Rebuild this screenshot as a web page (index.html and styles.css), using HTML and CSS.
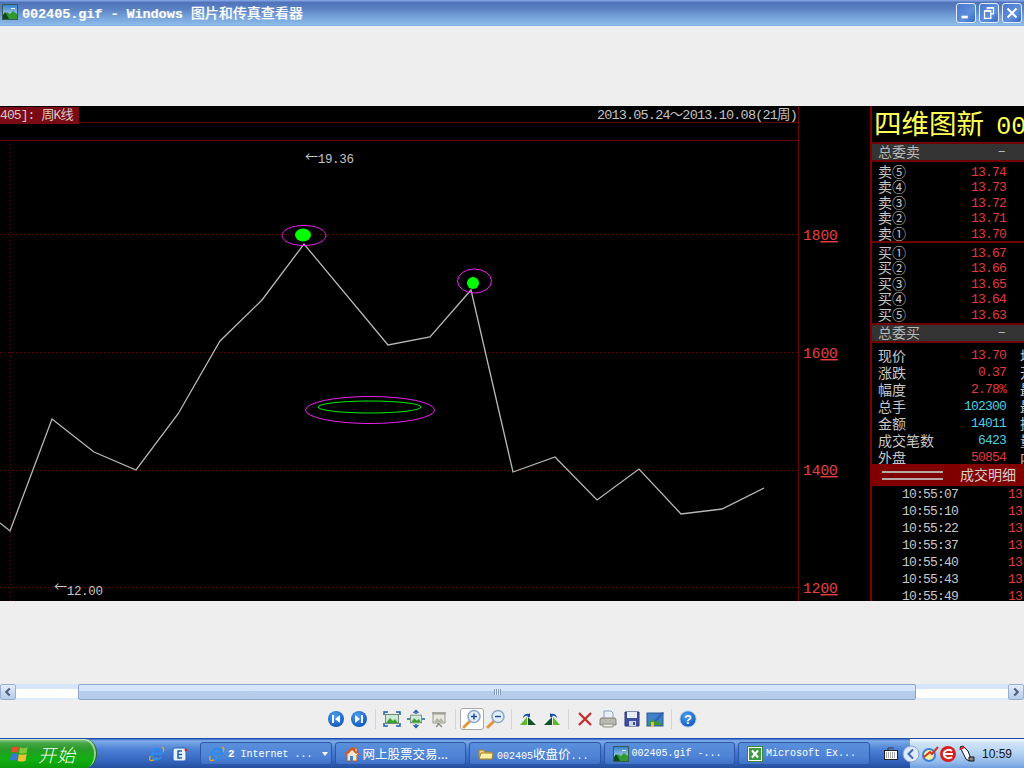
FILE: index.html
```html
<!DOCTYPE html>
<html lang="zh">
<head>
<meta charset="utf-8">
<title>002405.gif - Windows 图片和传真查看器</title>
<link rel="stylesheet" href="styles.css">
</head>
<body>
<svg class="defs" width="0" height="0">
  <defs>
    <linearGradient id="sky" x1="0" y1="0" x2="0" y2="1"><stop offset="0" stop-color="#2f7fd0"/><stop offset="1" stop-color="#d8f0f0"/></linearGradient>
    <radialGradient id="ball" cx="0.4" cy="0.3" r="0.8"><stop offset="0" stop-color="#4aa0f0"/><stop offset="1" stop-color="#0a4fb8"/></radialGradient>
    <symbol id="pic" viewBox="0 0 16 16">
      <rect x="0.5" y="0.5" width="15" height="15" fill="url(#sky)" stroke="#3d5a50"/>
      <path d="M1 12 5 8l3 2 3-3 4 3v5H1z" fill="#2f9a30"/>
      <path d="M1 11l2-3 2 3 2 4H1z" fill="#0d4a20"/>
      <path d="M9 4h4v1H9z" fill="#fff"/>
    </symbol>
    <symbol id="ie" viewBox="0 0 16 16">
      <path d="M13 1.500c2 0 2.500 2 .5 5M1.500 10c-1.500 3-1 5 1.500 4.500 1.500-.3 3-1 5-2.500" fill="none" stroke="#e8a828" stroke-width="1.300"/>
      <path d="M3.500 7.800h9.500M12.600 10.800A5.300 5.300 0 1 1 13.300 7.800" fill="none" stroke="#2a8cf0" stroke-width="2.100"/>
    </symbol>
    <symbol id="pict" viewBox="0 0 14 10">
      <rect x="0.5" y="0.5" width="13" height="9" fill="#cfe8d8" stroke="#708878"/>
      <path d="M1 9 5 4l3 3 2-2 3 4z" fill="#3aa030"/>
    </symbol>
    <symbol id="mag" viewBox="0 0 20 20">
      <path d="M8 12 2 18" stroke="#e09838" stroke-width="3" stroke-linecap="round"/>
      <circle cx="12" cy="7.5" r="6" fill="#e4eefa" stroke="#8da8c8" stroke-width="1.6"/>
    </symbol>
  </defs>
</svg>
<div class="win">
  <header class="title">
    <svg class="ic16"><use href="#pic"/></svg>
    <span class="title-text">002405.gif - Windows <span class="title-cjk">图片和传真查看器</span></span>
    <div class="ctrls">
      <span class="ctrl"><svg viewBox="0 0 20 20"><path d="M5 13h7v3H5z" fill="#fff"/></svg></span>
      <span class="ctrl"><svg viewBox="0 0 20 20"><path d="M8 6V4h7v7h-3M5 8h7v8H5z M5 8h7" fill="none" stroke="#fff" stroke-width="1.4"/><path d="M5 7.5h7M8 4.5h7" stroke="#fff" stroke-width="1.5"/></svg></span>
      <span class="ctrl"><svg viewBox="0 0 20 20"><path d="M5 5l10 10M15 5 5 15" stroke="#fff" stroke-width="2.2"/></svg></span>
    </div>
  </header>

  <main class="view">
    <div class="shot">
      <section class="chart">
        <svg class="plot" viewBox="0 106 870 495">
          <g class="grid">
            <path d="M0 234.500H798M0 352.500H798M0 470.500H798M0 587.500H798M10.500 140V601"/>
          </g>
          <path class="rule" d="M0 122.500H798M0 140.500H798M798.500 106V601"/>
          <polyline class="price" points="0,523 10,531 52,419 94,452 136,470 178,414 220,341 262,300 304,244 388,345 430,337 471,290 513,472 555,457 597,500 639,469 681,514 722,509 764,488"/>
          <ellipse class="mag" cx="304" cy="235.500" rx="22" ry="10"/>
          <ellipse class="dot" cx="303" cy="235" rx="8" ry="6.500"/>
          <ellipse class="mag" cx="474.500" cy="281" rx="17" ry="12"/>
          <ellipse class="dot" cx="473" cy="283" rx="6" ry="6"/>
          <ellipse class="mag" cx="370" cy="410" rx="64.500" ry="13.500"/>
          <ellipse class="lime" cx="369.500" cy="407" rx="51.500" ry="6"/>
          <text class="note" x="305" y="160.500"><tspan class="arr">←</tspan><tspan dy="2.500">19.36</tspan></text>
          <text class="note" x="54" y="590.500"><tspan class="arr">←</tspan><tspan dy="4.500">12.00</tspan></text>
          <text class="axis" x="803" y="240">18<tspan class="ul">00</tspan></text>
          <text class="axis" x="803" y="358">16<tspan class="ul">00</tspan></text>
          <text class="axis" x="803" y="475">14<tspan class="ul">00</tspan></text>
          <text class="axis" x="803" y="593">12<tspan class="ul">00</tspan></text>
        </svg>
        <div class="head">
          <span class="tag">405]: 周K线</span>
          <span class="range">2013.05.24～2013.10.08(21周)</span>
        </div>
      </section>
      <aside class="stock">
        <div class="name">四维图新 <span class="code">00</span></div>
        <div class="bar"><span>总委卖</span><span class="dash">–</span></div>
        <div class="book book-sell">
          <div class="row"><span>卖⑤</span><span class="n red">13.74</span></div>
          <div class="row"><span>卖④</span><span class="n red">13.73</span></div>
          <div class="row"><span>卖③</span><span class="n red">13.72</span></div>
          <div class="row"><span>卖②</span><span class="n red">13.71</span></div>
          <div class="row"><span>卖①</span><span class="n red">13.70</span></div>
        </div>
        <div class="book">
          <div class="row"><span>买①</span><span class="n red">13.67</span></div>
          <div class="row"><span>买②</span><span class="n red">13.66</span></div>
          <div class="row"><span>买③</span><span class="n red">13.65</span></div>
          <div class="row"><span>买④</span><span class="n red">13.64</span></div>
          <div class="row"><span>买⑤</span><span class="n red">13.63</span></div>
        </div>
        <div class="bar"><span>总委买</span><span class="dash">–</span></div>
        <div class="stats">
          <div class="srow"><span>现价</span><span class="n red">13.70</span><span class="x">均价</span></div>
          <div class="srow"><span>涨跌</span><span class="n red">0.37</span><span class="x">开盘</span></div>
          <div class="srow"><span>幅度</span><span class="n red">2.78%</span><span class="x">最高</span></div>
          <div class="srow"><span>总手</span><span class="n cyan">102300</span><span class="x">最低</span></div>
          <div class="srow"><span>金额</span><span class="n cyan">14011</span><span class="x">换手</span></div>
          <div class="srow"><span>成交笔数</span><span class="n cyan">6423</span><span class="x">量比</span></div>
          <div class="srow"><span>外盘</span><span class="n red">50854</span><span class="x">内盘</span></div>
        </div>
        <div class="deal"><span class="dbl"></span><span>成交明细</span></div>
        <div class="trades">
          <div class="trow"><span class="n t">10:55:07</span><span class="n red">13.70</span></div>
          <div class="trow"><span class="n t">10:55:10</span><span class="n red">13.70</span></div>
          <div class="trow"><span class="n t">10:55:22</span><span class="n red">13.70</span></div>
          <div class="trow"><span class="n t">10:55:37</span><span class="n red">13.70</span></div>
          <div class="trow"><span class="n t">10:55:40</span><span class="n red">13.70</span></div>
          <div class="trow"><span class="n t">10:55:43</span><span class="n red">13.70</span></div>
          <div class="trow"><span class="n t">10:55:49</span><span class="n red">13.70</span></div>
        </div>
      </aside>
    </div>
  </main>

  <div class="hscroll">
    <span class="sbtn"><svg viewBox="0 0 16 16"><path d="M10 4 6 8l4 4" fill="none" stroke="#4d6185" stroke-width="2.4"/></svg></span>
    <div class="track">
      <div class="thumb"><span class="grip"></span></div>
    </div>
    <span class="sbtn"><svg viewBox="0 0 16 16"><path d="M6 4l4 4-4 4" fill="none" stroke="#4d6185" stroke-width="2.4"/></svg></span>
  </div>

  <div class="tools">
    <span class="tool"><svg viewBox="0 0 20 20"><circle cx="10" cy="10" r="8" fill="url(#ball)"/><path d="M6 6h2v8H6zM14 6v8L9 10z" fill="#fff"/></svg></span>
    <span class="tool"><svg viewBox="0 0 20 20"><circle cx="10" cy="10" r="8" fill="url(#ball)"/><path d="M12 6h2v8h-2zM6 6v8l5-4z" fill="#fff"/></svg></span>
    <span class="sep"></span>
    <span class="tool"><svg viewBox="0 0 20 20"><use href="#pict" x="3" y="5" width="14" height="10"/><path d="M2 6V3h4M14 3h4v3M18 14v3h-4M6 17H2v-3" fill="none" stroke="#1c5fb0" stroke-width="1.5"/></svg></span>
    <span class="tool"><svg viewBox="0 0 20 20"><use href="#pict" x="4" y="5" width="12" height="10"/><path d="M1 10h3M16 10h3M10 2v3M10 15v3M7.500 4 10 1.500 12.500 4M7.500 16l2.500 2.500 2.500-2.500" fill="none" stroke="#1c5fb0" stroke-width="1.4"/></svg></span>
    <span class="tool"><svg viewBox="0 0 20 20"><path d="M3 3h14v2H3z" fill="#a8a8a0"/><path d="M4 5h12v9H4z" fill="#e8e8e0" stroke="#98988e"/><path d="M5 13l3-4 2 2 2-2 3 4z" fill="#b0b8a8"/><path d="M9 14v3M7 18l3-3 3 3" fill="none" stroke="#8a8a80" stroke-width="1.3"/></svg></span>
    <span class="sep"></span>
    <span class="tool on"><svg viewBox="0 0 20 20"><use href="#mag" width="20" height="20"/><path d="M9 7.500h6M12 4.500v6" stroke="#1c4f9c" stroke-width="1.5"/></svg></span>
    <span class="tool"><svg viewBox="0 0 20 20"><use href="#mag" width="20" height="20"/><path d="M9 7.500h6" stroke="#1c4f9c" stroke-width="1.5"/></svg></span>
    <span class="sep"></span>
    <span class="tool"><svg viewBox="0 0 20 20"><path d="M2 16 9 8v8z" fill="#5db82e"/><path d="M10 8l8 8h-8z" fill="#10502a"/><path d="M5 9c0-3 3-5 6-4l1-1v4H9l1-1c-2-.5-3 0-5 2z" fill="#1c4fb0"/></svg></span>
    <span class="tool"><svg viewBox="0 0 20 20"><path d="M18 16 11 8v8z" fill="#5db82e"/><path d="M10 8l-8 8h8z" fill="#10502a"/><path d="M15 9c0-3-3-5-6-4L8 4v4h3l-1-1c2-.5 3 0 5 2z" fill="#1c4fb0"/></svg></span>
    <span class="sep"></span>
    <span class="tool"><svg viewBox="0 0 20 20"><path d="M4 4l12 12M16 4 4 16" stroke="#c82c2c" stroke-width="2.3"/></svg></span>
    <span class="tool"><svg viewBox="0 0 20 20"><path d="M6 2h7l2 2v6H6z" fill="#eaf0f8" stroke="#8aa0b8"/><path d="M3 9h14l1 2v5H2v-5z" fill="#b8b8b0" stroke="#808078"/><path d="M5 15h10v3H5z" fill="#e8e8e0" stroke="#909088"/></svg></span>
    <span class="tool"><svg viewBox="0 0 20 20"><path d="M3 3h14v14H3z" fill="#3f4fa0" stroke="#2a3580"/><path d="M5 3h10v6H5z" fill="#e8ecf8"/><path d="M7 12h7v5H7z" fill="#d0d4e0"/><path d="M11 13h2v3h-2z" fill="#3f4fa0"/></svg></span>
    <span class="tool"><svg viewBox="0 0 20 20"><rect x="2" y="4" width="16" height="13" fill="#3f80c8" stroke="#2c5890"/><path d="M3 16l4-6 4 3 2-2 4 5z" fill="#3a9a30"/><path d="M9 12 17 3l2 1-8 9z" fill="#3060c0"/><path d="M6 13h3v5H6z" fill="#e8c040"/></svg></span>
    <span class="sep"></span>
    <span class="tool"><svg viewBox="0 0 20 20"><circle cx="10" cy="10" r="8.200" fill="url(#ball)" stroke="#c8d8ec"/><text class="q" x="10" y="14.500">?</text></svg></span>
  </div>

  <footer class="task">
    <div class="start">
      <svg class="flag" viewBox="0 0 18 18"><path d="M2 3c2-1 4-1 6 0l-1 5c-2-1-4-1-6 0z" fill="#e8502a"/><path d="M9 3c2 1 4 1 7 0l-1 5c-3 1-5 1-7 0z" fill="#7ec83a"/><path d="M1 9c2-1 4-1 6 0l-1 6c-2-1-4-1-6 0z" fill="#3a78d8"/><path d="M8 9c2 1 4 1 7 0l-1 6c-3 1-5 1-7 0z" fill="#f0c030"/></svg>
      <span class="start-text">开始</span>
    </div>
    <div class="quick">
      <svg class="ic16"><use href="#ie"/></svg>
      <svg class="ic16" viewBox="0 0 16 16"><rect x="1" y="2" width="13" height="13" rx="2" fill="#e8f2ff" stroke="#2a62b8"/><path d="M10 5H6v7h4M6 8.500h4" fill="none" stroke="#1c5fb0" stroke-width="1.500"/><circle cx="14" cy="4" r="1.500" fill="#d83020"/></svg>
    </div>
    <div class="tbtn"><svg class="ic16"><use href="#ie"/></svg><span class="tt"><b>2</b> Internet ...</span><span class="caret"></span></div>
    <div class="tbtn"><svg class="ic16" viewBox="0 0 16 16"><path d="M1 8 8 1l3 3V2h2v4l2 2-2 1v6H3V9z" fill="#f0e8d8" stroke="#c05a20"/><path d="M1 8 8 1l6 6-2 1-4-4-5 5z" fill="#d85a20"/><path d="M6 10h3v5H6z" fill="#4a80c8"/></svg><span class="tt cj">网上股票交易...</span></div>
    <div class="tbtn"><svg class="ic16" viewBox="0 0 16 16"><path d="M1 13V4h5l1 2h7v7z" fill="#f0d070" stroke="#a08030"/><path d="M1 13 3 7h12l-1 6z" fill="#fff0a8" stroke="#a08030"/></svg><span class="tt">002405<span class="cj">收盘价</span>...</span></div>
    <div class="tbtn"><svg class="ic16"><use href="#pic"/></svg><span class="tt">002405.gif -...</span></div>
    <div class="tbtn"><svg class="ic16" viewBox="0 0 16 16"><rect x="0.500" y="0.500" width="15" height="15" fill="#fff" stroke="#3a8a3a"/><rect x="2" y="2" width="12" height="12" fill="#3f9a48"/><path d="M5 4.500l6 7M11 4.500l-6 7" stroke="#fff" stroke-width="2"/></svg><span class="tt">Microsoft Ex...</span></div>
    <svg class="kbd" viewBox="0 0 14 14"><path d="M4 3V1h6" fill="none" stroke="#333"/><rect x="0.500" y="3.500" width="13" height="9" fill="#fff" stroke="#222"/><path d="M2 6h10M2 8h10M2 10h10" stroke="#555" stroke-dasharray="1 1"/></svg>
    <div class="tray">
      <svg class="ic18 chev" viewBox="0 0 18 18"><circle cx="9" cy="9" r="8" fill="#dfeafa" stroke="#7fa4dc"/><path d="M11 4.500 6.500 9l4.500 4.500" fill="none" stroke="#3a6ab8" stroke-width="2"/></svg>
      <svg class="ic18" viewBox="0 0 18 18"><circle cx="8" cy="10" r="6" fill="#f8f0a0" stroke="#3a80d8" stroke-width="2"/><path d="M3 12 9 7l2 2 6-7" fill="none" stroke="#d83020" stroke-width="2"/></svg>
      <svg class="ic18" viewBox="0 0 18 18"><circle cx="9" cy="9" r="8" fill="#d82020"/><path d="M4 9h10M13 6a5 4 0 1 0 0 6" fill="none" stroke="#fff" stroke-width="2"/></svg>
      <svg class="ic18" viewBox="0 0 18 18"><path d="M2 2l3-1 5 5 3 8-2 2-3-2-4-8z" fill="#fff" stroke="#111"/><path d="M1 4l5-3 1 2-5 2z" fill="#d02020"/><path d="M11 12h5v4h-5z" fill="#888" stroke="#111"/></svg>
      <span class="clock">10:59</span>
    </div>
  </footer>
</div>
</body>
</html>
```
FILE: styles.css
```css
* { box-sizing: border-box; }
html, body { margin: 0; height: 100%; overflow: hidden; }
body { font-family: "Liberation Sans", "Noto Sans CJK SC", sans-serif; background: #eeeeee; }
.defs { position: absolute; }
.win { width: 1024px; height: 768px; display: flex; flex-direction: column; }
.ic16 { width: 16px; height: 16px; flex: none; }
.ic18 { width: 18px; height: 18px; flex: none; }

.title { height: 26px; flex: none; display: flex; align-items: center; padding: 0 2px 2px; background: linear-gradient(#7f9fe0 0, #7f9fe0 1px, #4f72b9 2px, #5b80c2 9px, #6f9bd6 15px, #8dbbe9 25px, #7fa8e0 26px); }
.title-text { margin-left: 4px; color: #fff; font: bold 13.4px "Liberation Mono", "Noto Sans CJK SC", monospace; white-space: pre; text-shadow: 1px 0 0 rgba(255,255,255,.25); }
.title-cjk { font: 500 14px "Noto Sans CJK SC", sans-serif; }
.ctrls { margin-left: auto; display: flex; gap: 3px; margin-top: 1px; }
.ctrl { width: 20px; height: 20px; border: 1px solid #e4ecf8; border-radius: 3px; background: linear-gradient(135deg, #4a78cc, #5f8fdc 60%, #3868c0); display: block; }
.ctrl svg { display: block; width: 18px; height: 18px; }

.view { flex: 1; padding-top: 80px; min-height: 0; }
.shot { height: 495px; background: #000; display: flex; overflow: hidden; }
.chart { position: relative; width: 870px; flex: none; }
.plot { position: absolute; inset: 0; width: 870px; height: 495px; }
.grid path { fill: none; stroke: #6a0606; stroke-dasharray: 1 3; }
.rule { fill: none; stroke: #6a0505; }
.price { fill: none; stroke: #b8b8b8; stroke-width: 1.3; }
.mag { fill: none; stroke: #f020f0; }
.dot { fill: #00ff00; }
.lime { fill: none; stroke: #00f000; }
.note { fill: #c4c4c4; font: 12.5px "Liberation Mono", monospace; letter-spacing: -.3px; }
.arr { font: 13px "Noto Sans CJK SC", sans-serif; }
.axis { fill: #e84040; font: 14.500px "Liberation Mono", monospace; }
.ul { text-decoration: underline; }
.head { position: relative; width: 798px; height: 18px; display: flex; justify-content: space-between; align-items: center; color: #c4c4c4; }
.tag { height: 17px; background: #7a0a14; color: #d8c8c8; font: 13px/17px "Liberation Mono", "Noto Sans CJK SC", monospace; width: 79px; white-space: nowrap; overflow: hidden; letter-spacing: -.9px; }
.range { font: 13.500px/17px "Liberation Mono", "Noto Sans CJK SC", monospace; letter-spacing: -.82px; white-space: nowrap; padding-right: 1px; }

.stock { flex: 1; min-width: 0; border-left: 2px solid #800000; color: #c8c8c8; font: 14px "Noto Sans CJK SC", sans-serif; overflow: hidden; }
.name { height: 36px; padding-left: 2px; color: #ffff55; font: 400 27.500px/33px "Noto Sans CJK SC", sans-serif; white-space: nowrap; }
.code { font: 25px "Liberation Mono", monospace; margin-left: 6px; }
.bar { height: 20px; background: #333333; border-top: 2px solid #700000; border-bottom: 2px solid #700000; padding: 0 18px 2px 6px; display: flex; justify-content: space-between; align-items: center; font-size: 14px; line-height: 14px; color: #b8b8b8; }
.dash { font: 14px "Liberation Mono", monospace; }
.book { height: 80px; padding-top: 2.500px; }
.book-sell { height: 81px; border-bottom: 2px solid #700000; }
.row { height: 15.500px; display: flex; justify-content: space-between; align-items: center; line-height: 15px; padding: 0 18px 0 6px; }
.row > span:first-child { margin-bottom: 2px; }
.n { font: 13px "Liberation Mono", monospace; letter-spacing: -.8px; }
.red { color: #e23a3a; }
.cyan { color: #4ad0e0; }
.stats { height: 121px; padding-top: 4px; overflow: hidden; }
.srow { height: 17px; display: flex; align-items: center; padding: 0 4px 0 6px; white-space: nowrap; line-height: 17px; }
.srow .n { margin-left: auto; }
.srow .x { margin-left: 14px; width: 0; flex: none; }
.deal { height: 22px; background: #800000; display: flex; align-items: center; padding: 0 0 2px 10px; gap: 17px; color: #d8d0d0; white-space: nowrap; line-height: 18px; }
.dbl { width: 61px; height: 9px; margin-top: 2px; border-top: 2px solid #b8a8a8; border-bottom: 2px solid #b8a8a8; flex: none; }
.trades { height: 115px; overflow: hidden; }
.trow { height: 17px; display: flex; align-items: center; padding-left: 30px; white-space: nowrap; }
.t { color: #c8c8c8; width: 106px; flex: none; }

.hscroll { height: 16px; flex: none; display: flex; }
.sbtn { width: 16px; height: 16px; flex: none; border: 1px solid #9ab0d0; border-radius: 2px; background: linear-gradient(#e4eefb, #b4cbe8); }
.sbtn svg { display: block; width: 14px; height: 14px; }
.track { flex: 1; padding-left: 62px; padding-right: 92px; background: linear-gradient(#d6e5f9 0, #d6e5f9 5px, #fff 5px, #fff 14px, #e0eafa 14px); }
.thumb { height: 16px; display: flex; align-items: center; justify-content: center; border: 1px solid #8ea6ca; border-radius: 2px; background: linear-gradient(#d8e7fb 0, #d4e4fa 40%, #b8cfec 45%, #b4cae8); }
.grip { width: 7px; height: 6px; background: repeating-linear-gradient(90deg, #8298bc 0 1px, #e8f0fc 1px 2px); }

.tools { height: 38px; flex: none; display: flex; align-items: center; padding-left: 324px; padding-bottom: 1px; }
.tool { width: 23.500px; height: 22px; display: flex; align-items: center; justify-content: center; flex: none; }
.tool svg { width: 20px; height: 20px; }
.on { background: #fff; border: 1px solid #a8a8a8; border-radius: 3px; }
.sep { width: 1px; height: 20px; margin: 0 4.200px; background: #d4d4d0; flex: none; }
.q { fill: #fff; font: bold 13px "Liberation Sans", sans-serif; text-anchor: middle; }

.task { height: 30px; flex: none; display: flex; align-items: center; gap: 3px; border-top: 1px solid #1c4aa8; background: linear-gradient(#3a6fd0 0, #7fade8 2px, #6a9ae0 5px, #4a7fd4 11px, #3564bc 22px, #234f9e 29px); }
.start { width: 97px; height: 29px; flex: none; display: flex; align-items: center; padding-left: 10px; gap: 8px; border-radius: 0 12px 12px 0 / 0 14px 14px 0; border-right: 1px solid #2a6a30; background: linear-gradient(#9ad09a 0, #46a846 4px, #2a9a2a 10px, #10b010 20px, #0a9a0a 29px); box-shadow: inset -2px 1px 0 rgba(255,255,255,.5); }
.flag { width: 20px; height: 20px; flex: none; }
.start-text { color: #fff; font: italic 300 18px "Noto Sans CJK SC", sans-serif; letter-spacing: 1px; }
.quick { width: 97px; flex: none; display: flex; gap: 7px; padding-left: 49px; }
.tbtn { width: 131.500px; height: 23px; flex: none; display: flex; align-items: center; padding-left: 8px; gap: 3px; color: #fff; border: 1px solid #2a57a8; border-radius: 3px; background: linear-gradient(#5a8fdc, #4f84d6 60%, #3f72c8); }
.tt { font: 10px "Liberation Mono", monospace; white-space: pre; }
.tt b { font-size: 11px; }
.cj { font: 12.500px "Noto Sans CJK SC", sans-serif; }
.caret { margin-left: auto; margin-right: 3px; border: 3px solid transparent; border-top: 4px solid #fff; border-bottom: 0; }
.kbd { width: 14px; height: 14px; flex: none; margin-left: 11px; }
.tray { margin-left: auto; width: 114px; height: 29px; flex: none; display: flex; align-items: center; gap: .5px; background: linear-gradient(#f4f8fd 0, #cfe3f8 4px, #b4d3f2 14px, #8fb8ea 24px, #6f9ee0 29px); }
.chev { margin-left: -8px; }
.clock { margin-left: 6px; font: 12px "Liberation Sans", sans-serif; color: #111; }
```
